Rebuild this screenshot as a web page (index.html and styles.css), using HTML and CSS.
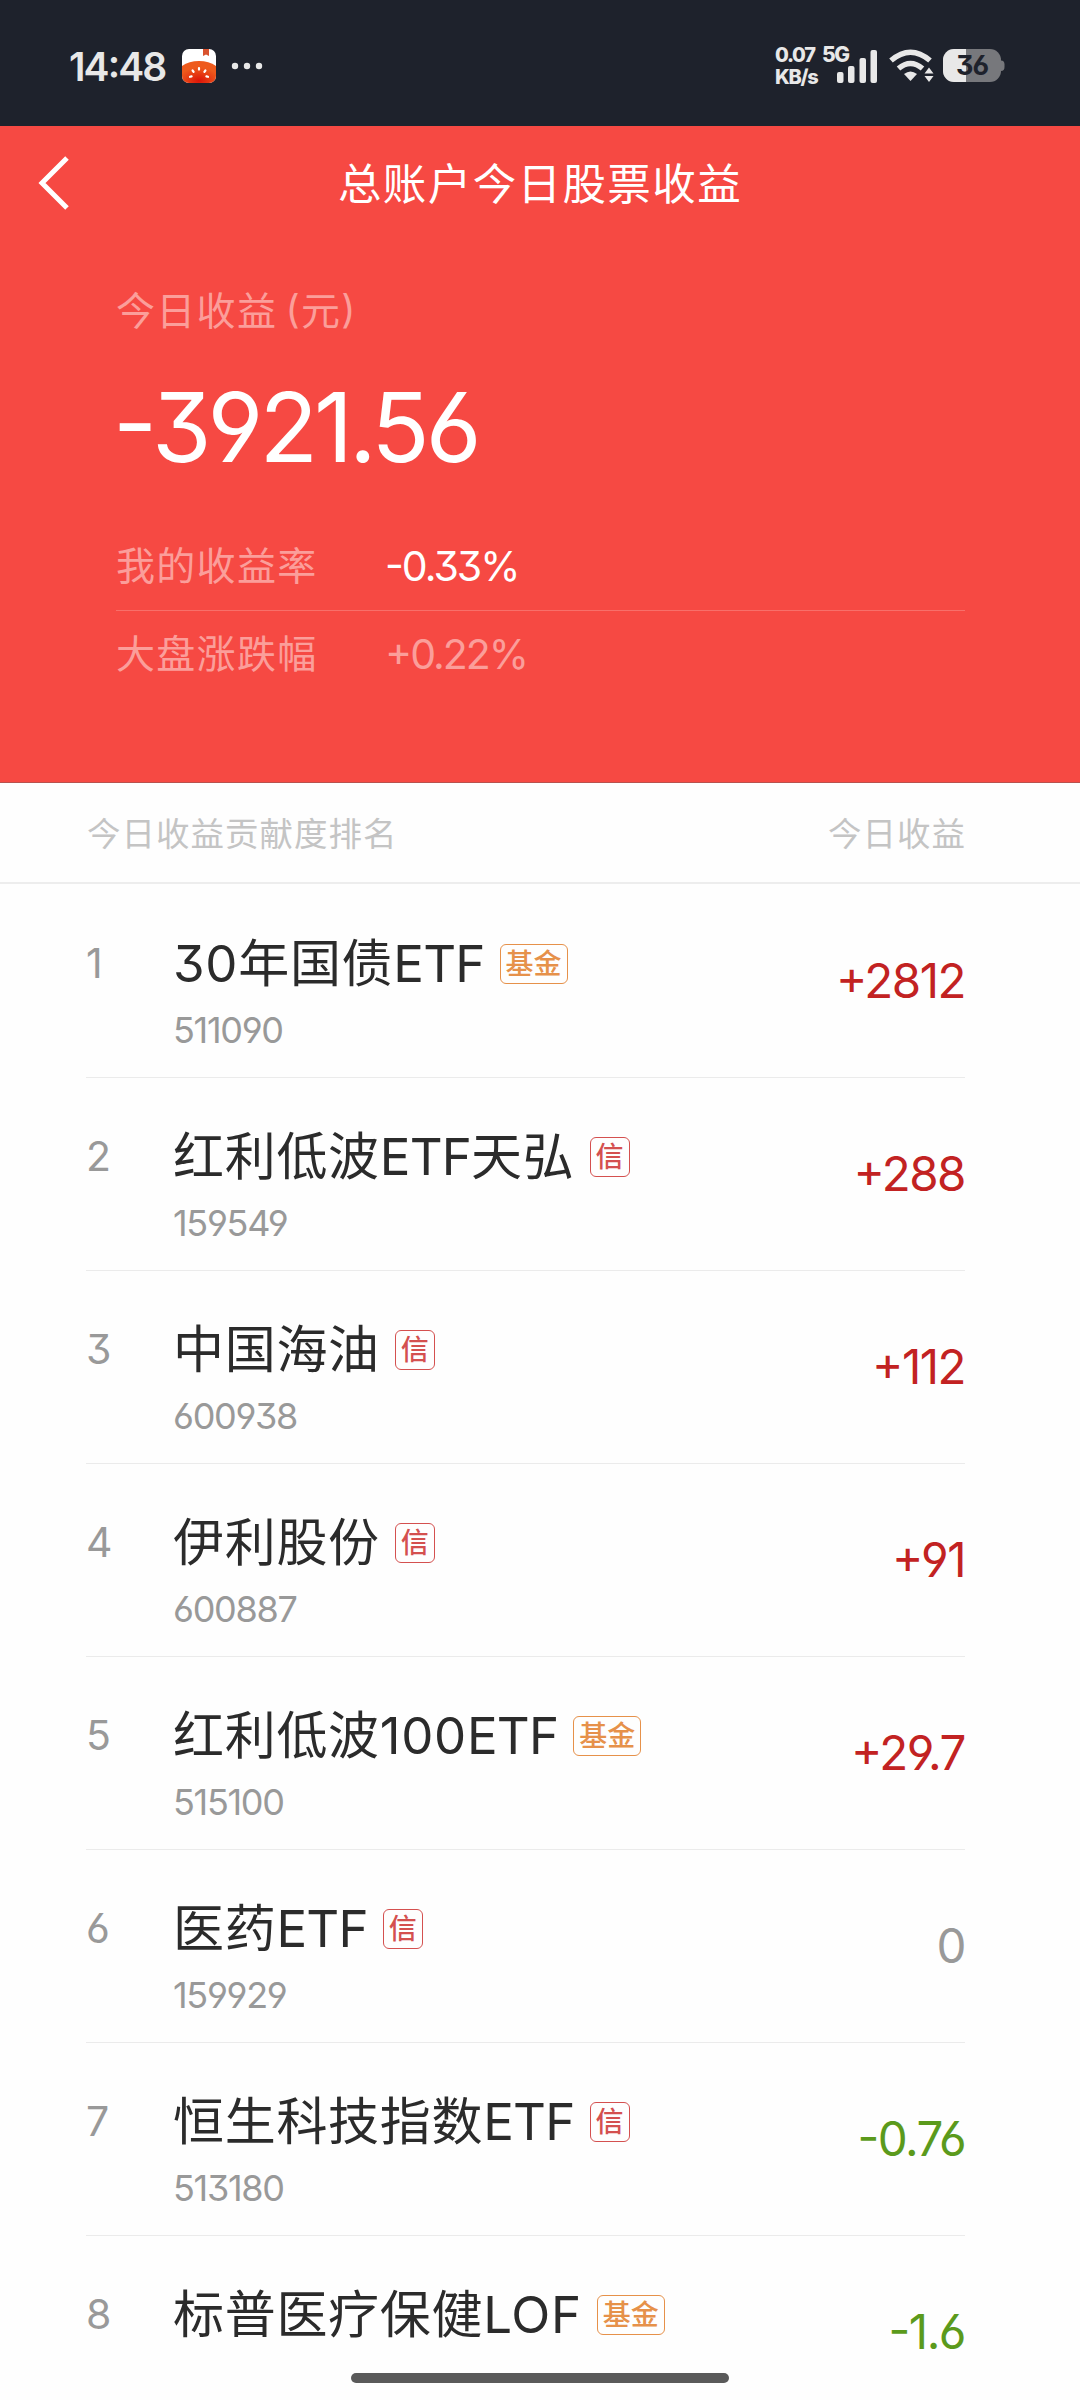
FILE: index.html
```html
<!DOCTYPE html>
<html lang="zh-CN">
<head>
    <meta charset="UTF-8">
    <meta name="viewport" content="width=device-width, initial-scale=1.0">
    <title>总账户今日股票收益</title>
    <link rel="stylesheet" href="styles.css">
</head>
<body>
    <div class="status-bar">
        <span class="clock">14:48</span>
        <svg class="app-icon" width="34" height="34" viewBox="0 0 34 34">
            <defs>
                <clipPath id="app-clip"><rect width="34" height="34" rx="7"/></clipPath>
                <radialGradient id="tomato" cx="0.5" cy="0.9" r="0.6">
                    <stop offset="0" stop-color="#dc1408"/>
                    <stop offset="1" stop-color="#ee5a1c"/>
                </radialGradient>
            </defs>
            <g clip-path="url(#app-clip)">
                <rect width="34" height="34" fill="#fff"/>
                <path d="M21 0h6v7l-3-1.500-3 1.500z" fill="#d9532f"/>
                <path d="M0 17Q7 12 17 12t17 5v17H0z" fill="url(#tomato)"/>
                <g stroke="#fff" stroke-width="2.200" stroke-linecap="round">
                    <path d="M17 19v1.600M10.600 21.500l1 1.400M23.400 21.500l-1 1.400M8 27.800l1.600-.4M26 27.800l-1.600-.4"/>
                </g>
            </g>
        </svg>
        <svg class="dots" width="32" height="8" viewBox="0 0 32 8" fill="#e8e8e8">
            <circle cx="4" cy="4" r="3.200"/>
            <circle cx="16" cy="4" r="3.200"/>
            <circle cx="28" cy="4" r="3.200"/>
        </svg>

        <div class="net-speed">
            <span>0.07</span>
            <span>KB/s</span>
        </div>
        <svg class="signal" width="56" height="40" viewBox="0 0 56 40" fill="#e8e8e8">
            <text class="signal-type" x="0" y="16">5G</text>
            <rect x="15" y="26" width="6.500" height="11" rx="2"/>
            <rect x="26" y="20" width="6.500" height="17" rx="2"/>
            <rect x="37.500" y="12" width="6.500" height="25" rx="2"/>
            <rect x="48.500" y="4" width="6.500" height="33" rx="2"/>
        </svg>
        <svg class="wifi" width="46" height="34" viewBox="0 0 46 34">
            <g fill="none" stroke="#e8e8e8" stroke-width="5.500">
                <path d="M2 11.500Q21.500-5 41 11.500"/>
                <path d="M9.500 19.500Q21.500 9.500 33.500 19.500"/>
            </g>
            <path d="M15 25q6.500-5 13 0l-6.500 7z" fill="#e8e8e8"/>
            <path d="M35.500 24.500l4.500-6 4.500 6zM35.500 27l4.500 6 4.500-6z" fill="#e8e8e8"/>
        </svg>
        <svg class="battery" width="62" height="34" viewBox="0 0 62 34">
            <defs><clipPath id="battery-clip"><rect width="58" height="33" rx="11"/></clipPath></defs>
            <path d="M58 11.500q3.500 0 3.500 4v2.500q0 4-3.500 4z" fill="#77787c"/>
            <g clip-path="url(#battery-clip)">
                <rect width="58" height="33" fill="#77787c"/>
                <rect width="23" height="33" fill="#e8e8e8"/>
            </g>
            <text class="battery-level" x="29" y="26" text-anchor="middle">36</text>
        </svg>
    </div>

    <div class="summary">
        <div class="nav">
            <svg class="back" width="34" height="56" viewBox="0 0 34 56">
                <path d="M31 3L6 28l25 25" fill="none" stroke="#fff" stroke-width="5"/>
            </svg>
            <h1>总账户今日股票收益</h1>
        </div>
        <div class="summary-body">
            <div class="label">今日收益 (元)</div>
            <div class="total">-3921.56</div>
            <div class="rate">
                <span class="label">我的收益率</span>
                <span class="rate-value mine">-0.33%</span>
            </div>
            <div class="rate">
                <span class="label">大盘涨跌幅</span>
                <span class="rate-value">+0.22%</span>
            </div>
        </div>
    </div>

    <div class="list-header">
        <span>今日收益贡献度排名</span>
        <span>今日收益</span>
    </div>

    <div class="list">
        <div class="row">
            <span class="rank">1</span>
            <div class="stock">
                <div class="name"><span>30年国债<span class="etf">ETF</span></span> <span class="tag fund">基金</span></div>
                <div class="code">511090</div>
            </div>
            <span class="amount up">+2812</span>
        </div>
        <div class="row">
            <span class="rank">2</span>
            <div class="stock">
                <div class="name"><span>红利低波<span class="etf">ETF</span>天弘</span> <span class="tag credit">信</span></div>
                <div class="code">159549</div>
            </div>
            <span class="amount up">+288</span>
        </div>
        <div class="row">
            <span class="rank">3</span>
            <div class="stock">
                <div class="name"><span>中国海油</span> <span class="tag credit">信</span></div>
                <div class="code">600938</div>
            </div>
            <span class="amount up">+112</span>
        </div>
        <div class="row">
            <span class="rank">4</span>
            <div class="stock">
                <div class="name"><span>伊利股份</span> <span class="tag credit">信</span></div>
                <div class="code">600887</div>
            </div>
            <span class="amount up">+91</span>
        </div>
        <div class="row">
            <span class="rank">5</span>
            <div class="stock">
                <div class="name"><span>红利低波100<span class="etf">ETF</span></span> <span class="tag fund">基金</span></div>
                <div class="code">515100</div>
            </div>
            <span class="amount up">+29.7</span>
        </div>
        <div class="row">
            <span class="rank">6</span>
            <div class="stock">
                <div class="name"><span>医药<span class="etf">ETF</span></span> <span class="tag credit">信</span></div>
                <div class="code">159929</div>
            </div>
            <span class="amount">0</span>
        </div>
        <div class="row">
            <span class="rank">7</span>
            <div class="stock">
                <div class="name"><span>恒生科技指数<span class="etf">ETF</span></span> <span class="tag credit">信</span></div>
                <div class="code">513180</div>
            </div>
            <span class="amount down">-0.76</span>
        </div>
        <div class="row">
            <span class="rank">8</span>
            <div class="stock">
                <div class="name"><span>标普医疗保健LOF</span> <span class="tag fund">基金</span></div>
            </div>
            <span class="amount down">-1.6</span>
        </div>
    </div>

    <div class="home-bar"></div>
</body>
</html>
```
FILE: styles.css
```css
* {
    box-sizing: border-box;
}

body {
    margin: 0;
    width: 1080px;
    height: 2400px;
    overflow: hidden;
    position: relative;
    background: #fefefe;
    color: #2b2b2b;
    font-family: Inter, "Noto Sans CJK SC", sans-serif;
    font-feature-settings: "cv03", "cv04", "cv09", "case";
}

/* status bar */
.status-bar {
    display: flex;
    align-items: center;
    height: 126px;
    padding: 6px 75px 0 69px;
    background: #1e222c;
    color: #e8e8e8;
}

.clock {
    width: 113px;
    font-size: 39px;
    font-weight: 600;
    letter-spacing: -1.9px;
}

.dots {
    margin-left: 15px;
}

.net-speed {
    display: flex;
    flex-direction: column;
    margin-left: auto;
    width: 47px;
    font-size: 20px;
    font-weight: 800;
    line-height: 22px;
    letter-spacing: -1.3px;
}

.signal {
    overflow: visible;
}

.signal-type {
    font-size: 21px;
    font-weight: 800;
    letter-spacing: -1.5px;
}

.wifi {
    margin-left: 11px;
}

.battery {
    margin-left: 8px;
}

.battery-level {
    fill: #1e222c;
    font-size: 27px;
    font-weight: 700;
    letter-spacing: -1px;
}

/* red summary block */
.summary {
    height: 657px;
    background: #f64943;
    border-bottom: 1px solid #b8524e;
    color: #fff;
}

.nav {
    display: grid;
    grid-template-columns: 72px 1fr 72px;
    align-items: center;
    height: 114px;
}

.back {
    margin-left: 36px;
}

h1 {
    margin: 2px 0 0;
    text-align: center;
    font-size: 43.5px;
    font-weight: 400;
    line-height: 60px;
    letter-spacing: 1.4px;
}

.summary-body {
    padding: 41px 115px 0 116px;
}

.label {
    font-size: 39px;
    line-height: 60px;
    letter-spacing: 1.3px;
    word-spacing: -4px;
    color: #fb9e9a;
}

.total {
    margin: 36px 0 45px -3px;
    font-size: 96px;
    line-height: 100px;
    letter-spacing: -4px;
}

.rate {
    display: flex;
    align-items: center;
    height: 88px;
}

.rate + .rate {
    height: 86px;
    border-top: 1px solid #f86f6a;
}

.rate .label {
    width: 269px;
}

.rate-value {
    font-size: 41px;
    letter-spacing: -2px;
    color: #fb9e9a;
}

.rate-value.mine {
    color: #fff;
}

/* ranking list */
.list-header {
    display: flex;
    justify-content: space-between;
    align-items: center;
    height: 101px;
    padding: 0 114px 2px 87px;
    border-bottom: 2px solid #ededed;
    font-size: 33.5px;
    letter-spacing: 1px;
    color: #c4c4c4;
}

.list {
    padding: 1px 115px 0 86px;
}

.row {
    display: grid;
    grid-template-columns: 87px 1fr auto;
    align-items: start;
    height: 193px;
    border-bottom: 1px solid #ebebeb;
}

.rank {
    padding-top: 48px;
    font-size: 41px;
    line-height: 60px;
    color: #999;
}

.stock {
    padding-top: 49px;
}

.name {
    display: flex;
    align-items: center;
    gap: 15px;
    font-size: 51px;
    line-height: 60px;
    letter-spacing: 0.7px;
}

.etf {
    letter-spacing: -0.8px;
}

.tag {
    height: 40px;
    padding: 0 5px;
    border: 1.5px solid;
    border-radius: 6px;
    font-size: 28px;
    font-weight: 500;
    line-height: 39px;
    letter-spacing: 0;
}

.fund {
    color: #e6914a;
}

.credit {
    color: #d4504f;
}

.code {
    margin-top: 11px;
    font-size: 36px;
    line-height: 50px;
    letter-spacing: -1.3px;
    color: #999;
}

.amount {
    padding-top: 66px;
    font-size: 47.5px;
    line-height: 60px;
    letter-spacing: -1.5px;
    color: #999;
}

.amount.up {
    color: #c22222;
}

.amount.down {
    color: #5b9a1c;
}

/* system gesture bar */
.home-bar {
    position: absolute;
    left: 351px;
    bottom: 17px;
    width: 378px;
    height: 10px;
    border-radius: 5px;
    background: #5a5a5a;
}
```
